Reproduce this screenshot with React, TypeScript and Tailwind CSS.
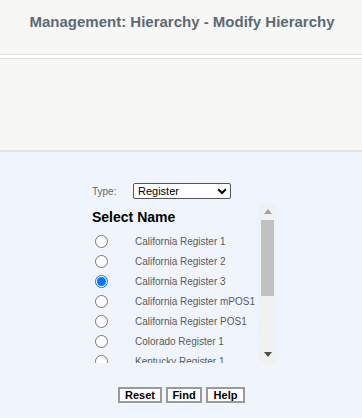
import React from "react";

const names = [
  "California Register 1",
  "California Register 2",
  "California Register 3",
  "California Register mPOS1",
  "California Register POS1",
  "Colorado Register 1",
  "Kentucky Register 1",
];

export default function App() {
  return (
    <div className="w-[362px] h-[418px] overflow-hidden bg-[#f0f5fd] font-['Liberation_Sans',Arial,sans-serif]">
      <div className="h-[55px] bg-[#f7f7f5] flex items-center justify-center border-b border-[#e2e2e0]">
        <h1 className="text-[15px] font-bold text-[#5b6a75] mb-[10px] ml-[2px]">
          Management: Hierarchy - Modify Hierarchy
        </h1>
      </div>
      <div className="h-[3px] bg-white" />
      <div className="h-[94px] bg-[#f7f7f5] border-t border-[#e2e2e0] border-b-[2px] border-b-[#e3e3e0]" />
      <div className="pt-[31px] flex flex-col">
        <div className="flex items-center h-[16px] pl-[92px]">
          <span className="text-[10px] text-[#666] w-[41px]">Type:</span>
          <div className="w-[98px] h-[16px] border border-[#555] rounded-[2px] bg-white flex items-center justify-between pl-[4px] pr-[3px]">
            <span className="text-[11px] text-black leading-none">Register</span>
            <svg width="10" height="7" viewBox="0 0 10 7">
              <path d="M1.2 1.2 L5 5 L8.8 1.2" stroke="#000" strokeWidth="2" fill="none" />
            </svg>
          </div>
        </div>
        <div className="flex pl-[92px] mt-[4px] h-[160px]">
          <div className="w-[167px] h-[160px] overflow-hidden shrink-0">
            <div className="h-[28px] flex items-center text-[14px] font-bold text-black pt-[1px]">
              Select Name
            </div>
            {names.map((n, i) => (
              <div key={n} className="h-[20px] flex items-center">
                <div className="w-[17px] shrink-0 flex justify-center ml-[1px]">
                  {i === 2 ? (
                    <div className="w-[13px] h-[13px] rounded-full border border-[#0a74ff] bg-white flex items-center justify-center">
                      <div className="w-[9px] h-[9px] rounded-full bg-[#0a74ff]" />
                    </div>
                  ) : (
                    <div className="w-[13px] h-[13px] rounded-full border border-[#767676] bg-white" />
                  )}
                </div>
                <span className="ml-[25px] shrink-0 text-[10px] text-[#5a5a5a] whitespace-nowrap">{n}</span>
              </div>
            ))}
          </div>
          <div className="w-[17px] h-[160px] shrink-0 bg-[#f1f1f1] flex flex-col items-center">
            <div className="h-[17px] flex items-center justify-center">
              <svg width="8" height="5" viewBox="0 0 8 5"><path d="M0 5 L4 0 L8 5 Z" fill="#a3a3a3" /></svg>
            </div>
            <div className="w-[13px] h-[76px] bg-[#c1c1c1]" />
            <div className="flex-1" />
            <div className="h-[17px] flex items-center justify-center">
              <svg width="8" height="5" viewBox="0 0 8 5"><path d="M0 0 L8 0 L4 5 Z" fill="#505050" /></svg>
            </div>
          </div>
        </div>
        <div className="flex justify-center gap-[4px] mt-[24px] pl-[1px]">
          {[
            ["Reset", "w-[44px]"],
            ["Find", "w-[36px]"],
            ["Help", "w-[39px]"],
          ].map(([t, w]) => (
            <button
              key={t}
              className={`${w} h-[16px] border-2 border-[#9a9a9a] bg-white text-[11px] font-bold text-black leading-none flex items-center justify-center`}
            >
              {t}
            </button>
          ))}
        </div>
      </div>
    </div>
  );
}
